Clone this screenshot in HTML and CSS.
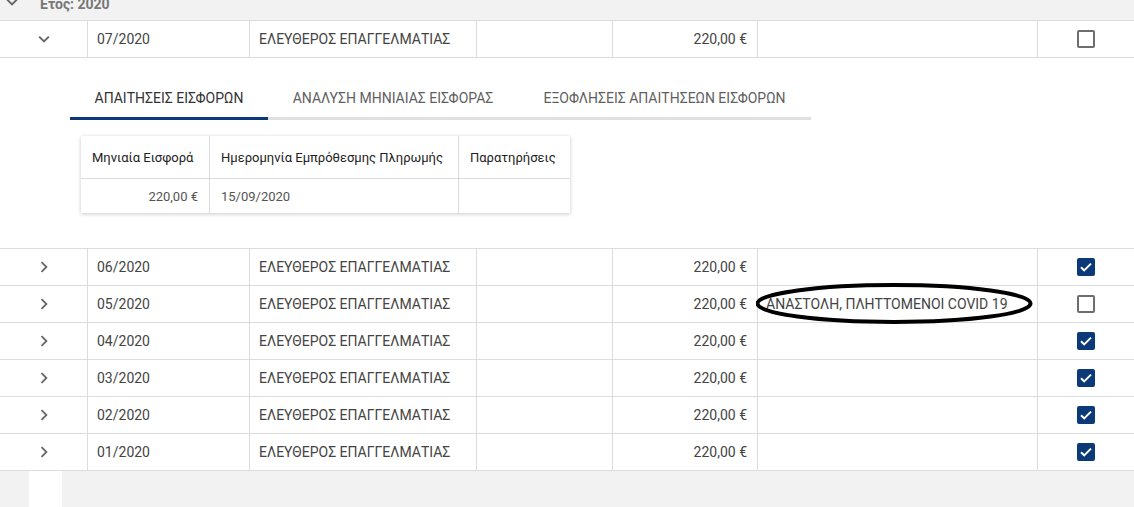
FILE: index.html
```html
<!DOCTYPE html>
<html lang="el">
<head>
<meta charset="utf-8">
<link rel="stylesheet" href="styles.css">
</head>
<body>
<div class="page">
  <div class="group-header">
    <span class="chev"><svg viewBox="0 0 24 24" width="22" height="22"><path d="M7.4 8.6 12 13.2l4.6-4.6L18 10l-6 6-6-6z" fill="#666"/></svg></span>
    <span class="group-title">Ετος: 2020</span>
  </div>

  <div class="row">
    <div class="cell c1"><svg viewBox="0 0 24 24" width="22" height="22"><path d="M7.4 8.6 12 13.2l4.6-4.6L18 10l-6 6-6-6z" fill="#666"/></svg></div>
    <div class="cell">07/2020</div>
    <div class="cell">ΕΛΕΥΘΕΡΟΣ ΕΠΑΓΓΕΛΜΑΤΙΑΣ</div>
    <div class="cell"></div>
    <div class="cell num">220,00 €</div>
    <div class="cell"></div>
    <div class="cell chk"><span class="box"></span></div>
  </div>

  <div class="detail">
    <div class="tabs">
      <div class="tab active t1">ΑΠΑΙΤΗΣΕΙΣ ΕΙΣΦΟΡΩΝ</div>
      <div class="tab t2">ΑΝΑΛΥΣΗ ΜΗΝΙΑΙΑΣ ΕΙΣΦΟΡΑΣ</div>
      <div class="tab t3">ΕΞΟΦΛΗΣΕΙΣ ΑΠΑΙΤΗΣΕΩΝ ΕΙΣΦΟΡΩΝ</div>
    </div>
    <div class="card">
      <div class="crow head">
        <div class="cc">Μηνιαία Εισφορά</div>
        <div class="cc">Ημερομηνία Εμπρόθεσμης Πληρωμής</div>
        <div class="cc">Παρατηρήσεις</div>
      </div>
      <div class="crow data">
        <div class="cc num">220,00 €</div>
        <div class="cc">15/09/2020</div>
        <div class="cc"></div>
      </div>
    </div>
  </div>

  <div class="row">
    <div class="cell c1"><svg viewBox="0 0 24 24" width="22" height="22"><path d="M8.6 16.6 13.2 12 8.6 7.4 10 6l6 6-6 6z" fill="#666"/></svg></div>
    <div class="cell">06/2020</div>
    <div class="cell">ΕΛΕΥΘΕΡΟΣ ΕΠΑΓΓΕΛΜΑΤΙΑΣ</div>
    <div class="cell"></div>
    <div class="cell num">220,00 €</div>
    <div class="cell"></div>
    <div class="cell chk"><span class="box on"><svg viewBox="0 0 18 18" width="18" height="18"><path d="M4 9.2l3.2 3.2L14 5.6" fill="none" stroke="#fff" stroke-width="2"/></svg></span></div>
  </div>

  <div class="row">
    <div class="cell c1"><svg viewBox="0 0 24 24" width="22" height="22"><path d="M8.6 16.6 13.2 12 8.6 7.4 10 6l6 6-6 6z" fill="#666"/></svg></div>
    <div class="cell">05/2020</div>
    <div class="cell">ΕΛΕΥΘΕΡΟΣ ΕΠΑΓΓΕΛΜΑΤΙΑΣ</div>
    <div class="cell"></div>
    <div class="cell num">220,00 €</div>
    <div class="cell note">ΑΝΑΣΤΟΛΗ, ΠΛΗΤΤΟΜΕΝΟΙ COVID 19
      <svg class="circle" viewBox="0 0 280 42" width="280" height="42"><ellipse cx="138" cy="20.5" rx="136.5" ry="18.5" fill="none" stroke="#000" stroke-width="4"/></svg>
    </div>
    <div class="cell chk"><span class="box"></span></div>
  </div>

  <div class="row">
    <div class="cell c1"><svg viewBox="0 0 24 24" width="22" height="22"><path d="M8.6 16.6 13.2 12 8.6 7.4 10 6l6 6-6 6z" fill="#666"/></svg></div>
    <div class="cell">04/2020</div>
    <div class="cell">ΕΛΕΥΘΕΡΟΣ ΕΠΑΓΓΕΛΜΑΤΙΑΣ</div>
    <div class="cell"></div>
    <div class="cell num">220,00 €</div>
    <div class="cell"></div>
    <div class="cell chk"><span class="box on"><svg viewBox="0 0 18 18" width="18" height="18"><path d="M4 9.2l3.2 3.2L14 5.6" fill="none" stroke="#fff" stroke-width="2"/></svg></span></div>
  </div>

  <div class="row">
    <div class="cell c1"><svg viewBox="0 0 24 24" width="22" height="22"><path d="M8.6 16.6 13.2 12 8.6 7.4 10 6l6 6-6 6z" fill="#666"/></svg></div>
    <div class="cell">03/2020</div>
    <div class="cell">ΕΛΕΥΘΕΡΟΣ ΕΠΑΓΓΕΛΜΑΤΙΑΣ</div>
    <div class="cell"></div>
    <div class="cell num">220,00 €</div>
    <div class="cell"></div>
    <div class="cell chk"><span class="box on"><svg viewBox="0 0 18 18" width="18" height="18"><path d="M4 9.2l3.2 3.2L14 5.6" fill="none" stroke="#fff" stroke-width="2"/></svg></span></div>
  </div>

  <div class="row">
    <div class="cell c1"><svg viewBox="0 0 24 24" width="22" height="22"><path d="M8.6 16.6 13.2 12 8.6 7.4 10 6l6 6-6 6z" fill="#666"/></svg></div>
    <div class="cell">02/2020</div>
    <div class="cell">ΕΛΕΥΘΕΡΟΣ ΕΠΑΓΓΕΛΜΑΤΙΑΣ</div>
    <div class="cell"></div>
    <div class="cell num">220,00 €</div>
    <div class="cell"></div>
    <div class="cell chk"><span class="box on"><svg viewBox="0 0 18 18" width="18" height="18"><path d="M4 9.2l3.2 3.2L14 5.6" fill="none" stroke="#fff" stroke-width="2"/></svg></span></div>
  </div>

  <div class="row">
    <div class="cell c1"><svg viewBox="0 0 24 24" width="22" height="22"><path d="M8.6 16.6 13.2 12 8.6 7.4 10 6l6 6-6 6z" fill="#666"/></svg></div>
    <div class="cell">01/2020</div>
    <div class="cell">ΕΛΕΥΘΕΡΟΣ ΕΠΑΓΓΕΛΜΑΤΙΑΣ</div>
    <div class="cell"></div>
    <div class="cell num">220,00 €</div>
    <div class="cell"></div>
    <div class="cell chk"><span class="box on"><svg viewBox="0 0 18 18" width="18" height="18"><path d="M4 9.2l3.2 3.2L14 5.6" fill="none" stroke="#fff" stroke-width="2"/></svg></span></div>
  </div>

  <div class="footer"><div class="footer-block"></div></div>
</div>
</body>
</html>
```
FILE: styles.css
```css
html, body {
  margin: 0;
  padding: 0;
  background: #fff;
  overflow: hidden;
}
body {
  font-family: Roboto, "Noto Sans", sans-serif;
  font-size: 14px;
  color: #444;
}
.page {
  width: 1134px;
  height: 507px;
  overflow: hidden;
}
.group-header {
  height: 37px;
  margin-top: -16px;
  background: #f2f2f2;
  border-bottom: 1px solid #dcdcdc;
  display: flex;
  align-items: center;
  box-sizing: border-box;
}
.group-header .chev {
  width: 22px;
  height: 22px;
  margin-left: 1px;
  display: flex;
}
.group-title {
  margin-left: 17px;
  font-weight: 700;
  color: #777;
  font-size: 14px;
  position: relative;
  top: 2px;
}
.row {
  display: grid;
  grid-template-columns: 87px 162px 227px 136px 145px 280px 97px;
  height: 37px;
  border-bottom: 1px solid #dcdcdc;
  box-sizing: border-box;
}
.cell {
  border-left: 1px solid #dcdcdc;
  padding: 0 9px;
  display: flex;
  align-items: center;
  white-space: nowrap;
  position: relative;
}
.cell.c1 {
  border-left: none;
  justify-content: center;
  padding: 0;
}
.cell.num {
  justify-content: flex-end;
  padding-right: 10px;
}
.cell.note {
  padding-left: 8px;
}
.cell.chk {
  justify-content: center;
  padding: 0;
}
.box {
  width: 18px;
  height: 18px;
  box-sizing: border-box;
  border: 2px solid #6e6e6e;
  border-radius: 2px;
  display: block;
  position: relative;
}
.box.on {
  background: #0c3a78;
  border-color: #0c3a78;
}
.box.on svg {
  position: absolute;
  left: -2px;
  top: -2px;
}
.circle {
  position: absolute;
  left: -2px;
  top: -3px;
  pointer-events: none;
}
.detail {
  height: 191px;
  border-bottom: 1px solid #dcdcdc;
  box-sizing: border-box;
  padding-top: 18px;
}
.tabs {
  display: flex;
  margin-left: 70px;
  width: 741px;
  border-bottom: 3px solid #e0e0e0;
}
.tab {
  text-align: center;
  padding-top: 15px;
  line-height: 15px;
  padding-bottom: 11px;
  margin-bottom: -3px;
  border-bottom: 3px solid transparent;
  color: #5f5f5f;
  font-size: 14px;
  white-space: nowrap;
}
.tab.active {
  border-bottom-color: #0c3a78;
  color: #333;
}
.t1 { width: 198px; }
.t2 { width: 250px; }
.t3 { width: 293px; }
.card {
  margin-left: 81px;
  margin-top: 16px;
  width: 489px;
  background: #fff;
  box-shadow: 0 1px 4px rgba(0,0,0,0.22);
}
.crow {
  display: grid;
  grid-template-columns: 128px 249px 112px;
}
.crow.head {
  height: 42px;
  border-bottom: 1px solid #dcdcdc;
  color: #222;
  font-size: 13px;
}
.crow.data {
  height: 34px;
  color: #555;
  font-size: 13px;
}
.cc {
  display: flex;
  align-items: center;
  padding: 0 11px;
  border-left: 1px solid #dcdcdc;
  white-space: nowrap;
}
.cc:first-child {
  border-left: none;
}
.cc.num {
  justify-content: flex-end;
}
.footer {
  height: 40px;
  background: #f2f2f2;
}
.footer-block {
  margin-left: 29px;
  width: 33px;
  height: 40px;
  background: #fff;
}
```
